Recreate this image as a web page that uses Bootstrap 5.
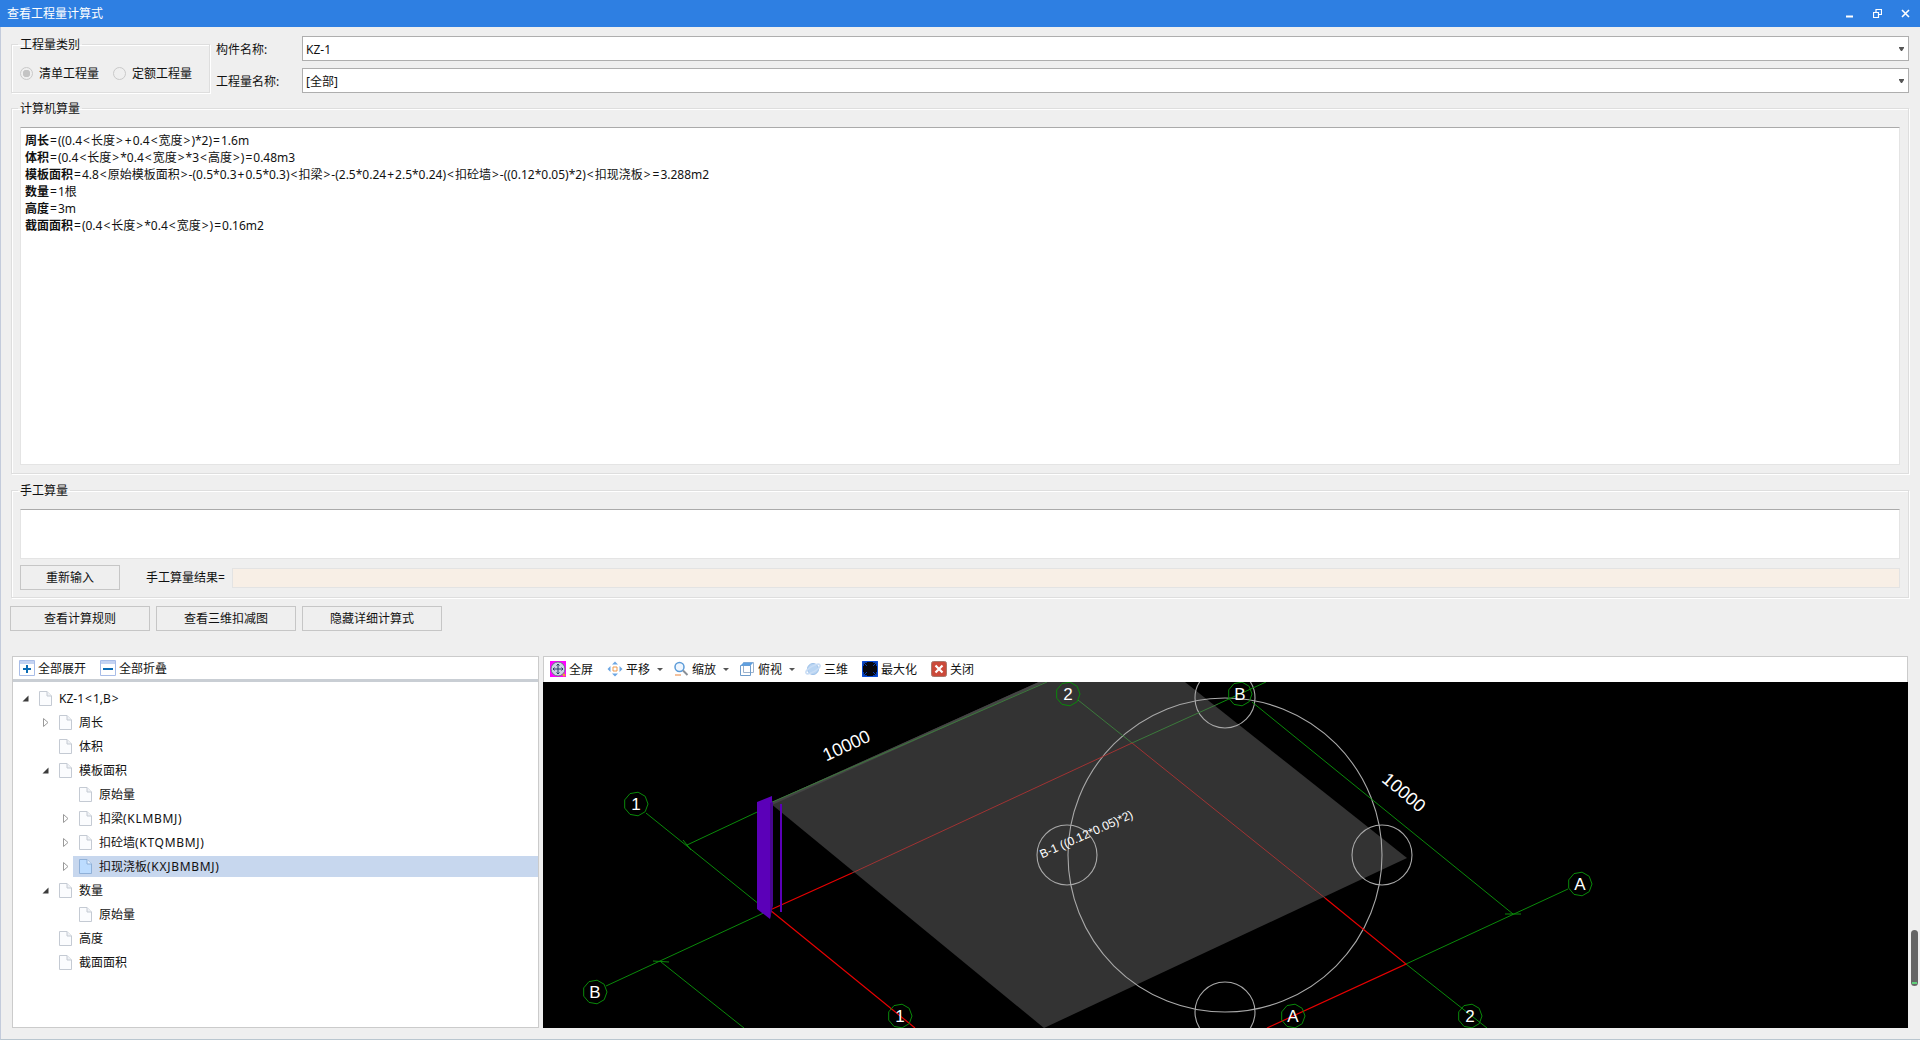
<!DOCTYPE html>
<html lang="zh-CN">
<head>
  <meta charset="UTF-8" />
  <meta name="viewport" content="width=device-width, initial-scale=1.0"/>
  <title>查看工程量计算式</title>
  <link href="https://cdn.jsdelivr.net/npm/bootstrap@5.3.3/dist/css/bootstrap.min.css" rel="stylesheet"/>
  <style>
    html, body { height: 100%; overflow: hidden; }
    body { font-family: "Noto Sans", "Noto Sans CJK SC", sans-serif; font-size: 12px; line-height: 17px; color: #111; background: #efefef; }
    .win { width: 1920px; height: 1040px; border-left: 1px solid #c3cbdb; border-bottom: 1px solid #b9c6cf; position: relative; }
    .title-bar { height: 27px; background: #2e7fe2; color: #fff; padding-left: 7px; margin-left: -1px; }
    .win-btns { padding-right: 10px; gap: 19px; }
    .top-row { height: 73px; padding: 9px 11px 0 10px; }
    .etched { border: 1px solid #dedede; box-shadow: 1px 1px 0 #fff, inset 1px 1px 0 #fff; margin: 0; min-width: 0; }
    .etched > legend { float: none; width: auto; font-size: 12px; line-height: 17px; margin: 0 0 0 -2px; padding: 0 2px; }
    .type-group { width: 199px; height: 57px; padding: 12px 0 0 8px; }
    .type-group .form-check-input { width: 13px; height: 13px; margin: 0; background-color: #efefef; border-color: #c9c9c9; opacity: 1; flex: none; }
    .type-group .form-check-input:checked { background-image: radial-gradient(circle, #c4c4c4 0 3.5px, transparent 4px); }
    .radio-text { margin: 0 14px 0 6px; opacity: 1; }
    .field-col { margin-left: 6px; gap: 7px; }
    .field-label { width: 86px; flex: none; padding-top: 2px; }
    .combo { height: 25px; padding: 2px 20px 0 3px; font-size: 12px; border: 1px solid #aeaeae; border-radius: 0; color: #111;
      background-image: url("data:image/svg+xml,%3csvg xmlns='http://www.w3.org/2000/svg' width='5' height='4'%3e%3cpath d='M0 0h5v1L3 4H2L0 1z' fill='%23555'/%3e%3c/svg%3e");
      background-size: 5px 4px; background-position: right 4px center; }
    .calc-group { margin: 0 11px 0 10px; height: 374px; padding: 10px 8px 8px 8px; }
    .formula-box { height: 338px; background: #fff; border: 1px solid #e4e4e4; border-top-color: #aaa; padding: 4px 4px; }
    .op { padding: 0 1px; }
    .code-tag { letter-spacing: .7px; }
    .hand-group { margin: 8px 11px 0 10px; height: 116px; padding: 10px 8px 0 8px; }
    .hand-input { height: 50px; background: #fff; border: 1px solid #e4e4e4; border-top-color: #aaa; }
    .hand-row { margin-top: 6px; }
    .flat-btn { background: #efefef; border: 1px solid #c6c6c6; font-size: 12px; color: #111; padding: 0; border-radius: 0; line-height: 22px; }
    .redo-btn { width: 100px; height: 25px; }
    .hand-label { margin-left: 26px; width: 86px; flex: none; }
    .result-box { height: 20px; background: #f8efe6; border: 1px solid #e3e3e3; }
    .action-row { padding: 8px 0 0 9px; gap: 6px; }
    .action-btn { width: 140px; height: 25px; }
    .panes { margin: 25px 11px 0 11px; height: 372px; gap: 4px; }
    .tree-pane { width: 527px; background: #fff; border: 1px solid #cbcbcb; }
    .tree-bar { height: 25px; border-bottom: 3px solid #c9ced4; padding: 0 0 0 6px; }
    .view-pane { width: 1365px; }
    .view-bar { height: 26px; background: #fff; border-top: 1px solid #cbcbcb; border-right: 1px solid #cbcbcb; border-left: 1px solid #cbcbcb; padding: 0 0 1px 6px; }
    .tool-item { gap: 3px; white-space: nowrap; }
    .tool-item svg { flex: none; display: block; }
    .tool-item + .tool-item { margin-left: 14px; }
    .tool-caret { width: 0; height: 0; border: 3px solid transparent; border-top: 3px solid #555; border-bottom: 0; margin-left: 4px; }
    .tool-item + .tool-item.after-caret { margin-left: 10px; }
    .tree-body { padding-top: 4px; }
    .tree-row { height: 24px; }
    .tree-row svg { flex: none; display: block; }
    .tree-twist { width: 9px; height: 9px; margin-right: 9px; }
    .tree-icon { width: 13px; height: 15px; margin-right: 7px; }
    .lvl0 { padding-left: 8px; }
    .lvl1 { padding-left: 28px; }
    .lvl2 { padding-left: 48px; }
    .tree-hit { flex: 1; height: 21px; margin-left: -6px; padding-left: 6px; }
    .tree-hit.active-row { background: #c7d7ee; }
    .cad { display: block; background: #000; }
    .cad text { font-family: "Liberation Sans", sans-serif; fill: #fff; }
    .ln-g { stroke: #0a8a0a; fill: none; stroke-width: 1; }
    .ln-gd { stroke: #3b7a3b; fill: none; stroke-width: 1; }
    .ln-r { stroke: #e80000; fill: none; stroke-width: 1.2; }
    .ln-rd { stroke: #a03333; fill: none; stroke-width: 1; }
    .ln-c { stroke: #a9a9a9; fill: none; stroke-width: 1.1; }
    .scroll-thumb { position: absolute; right: 2px; top: 930px; width: 7px; height: 56px; background: #666; border-radius: 4px; }
    .scroll-thumb::after { content: ""; position: absolute; left: 1px; right: 1px; bottom: 2px; height: 2px; background: #5fd07a; }
  </style>
</head>
<body>
<svg width="0" height="0" class="position-absolute">
  <defs>
    <symbol id="page" viewBox="0 0 13 15">
      <path d="M.5.5h7.500l4.500 4.500v9.500H.5z" fill="#fbfcfe" stroke="#c4cad3"/>
      <path d="M8 .5V5h4.500" fill="#eef1f5" stroke="#c4cad3"/>
    </symbol>
    <symbol id="page-sel" viewBox="0 0 13 15">
      <path d="M.5.5h7.500l4.500 4.500v9.500H.5z" fill="#bcdcff" stroke="#8fb0d8"/>
      <path d="M8 .5V5h4.500" fill="#e3f0ff" stroke="#8fb0d8"/>
    </symbol>
    <symbol id="open" viewBox="0 0 9 9"><path d="M7.500 1.500v6h-6z" fill="#3c3c3c"/></symbol>
    <symbol id="closed" viewBox="0 0 9 9"><path d="M2.500 .5l4.500 4-4.500 4z" fill="#fff" stroke="#9a9a9a"/></symbol>
    <polygon id="bubble" points="12,0 9.2,7.7 2.1,11.8 -6,10.4 -11.3,4.1 -11.3,-4.1 -6,-10.4 2.1,-11.8 9.2,-7.7" fill="none" stroke="#0a8a0a"/>
  </defs>
</svg>

<div class="win d-flex flex-column">
  <div class="title-bar d-flex align-items-center justify-content-between">
    <span>查看工程量计算式</span>
    <div class="win-btns d-flex align-items-center">
      <svg width="9" height="9" viewBox="0 0 9 9"><path d="M1 7.500h7" stroke="#fff" stroke-width="2"/></svg>
      <svg width="9" height="9" viewBox="0 0 9 9" fill="none" stroke="#fff"><path d="M.5 3.500h5v5h-5z" stroke-width="1.200"/><path d="M3 3V.5h5.500v5H6" stroke-width="1.200"/></svg>
      <svg width="9" height="9" viewBox="0 0 9 9"><path d="M1 1l7 7M8 1l-7 7" stroke="#fff" stroke-width="1.600"/></svg>
    </div>
  </div>

  <div class="top-row d-flex">
    <fieldset class="etched type-group">
      <legend>工程量类别</legend>
      <div class="d-flex align-items-center">
        <input class="form-check-input" type="radio" name="qtype" id="qt1" checked disabled>
        <label for="qt1" class="radio-text">清单工程量</label>
        <input class="form-check-input" type="radio" name="qtype" id="qt2" disabled>
        <label for="qt2" class="radio-text">定额工程量</label>
      </div>
    </fieldset>
    <div class="field-col flex-grow-1 d-flex flex-column">
      <div class="d-flex align-items-center">
        <span class="field-label">构件名称:</span>
        <select class="form-select combo"><option>KZ-1</option></select>
      </div>
      <div class="d-flex align-items-center">
        <span class="field-label">工程量名称:</span>
        <select class="form-select combo"><option>[全部]</option></select>
      </div>
    </div>
  </div>

  <fieldset class="etched calc-group">
    <legend>计算机算量</legend>
    <div class="formula-box">
      <div><b>周长</b><span class="op">=</span>((0.4<span class="op">&lt;</span>长度<span class="op">&gt;</span><span class="op">+</span>0.4<span class="op">&lt;</span>宽度<span class="op">&gt;</span>)*2)<span class="op">=</span>1.6m</div>
      <div><b>体积</b><span class="op">=</span>(0.4<span class="op">&lt;</span>长度<span class="op">&gt;</span>*0.4<span class="op">&lt;</span>宽度<span class="op">&gt;</span>*3<span class="op">&lt;</span>高度<span class="op">&gt;</span>)<span class="op">=</span>0.48m3</div>
      <div><b>模板面积</b><span class="op">=</span>4.8<span class="op">&lt;</span>原始模板面积<span class="op">&gt;</span>-(0.5*0.3<span class="op">+</span>0.5*0.3)<span class="op">&lt;</span>扣梁<span class="op">&gt;</span>-(2.5*0.24<span class="op">+</span>2.5*0.24)<span class="op">&lt;</span>扣砼墙<span class="op">&gt;</span>-((0.12*0.05)*2)<span class="op">&lt;</span>扣现浇板<span class="op">&gt;</span><span class="op">=</span>3.288m2</div>
      <div><b>数量</b><span class="op">=</span>1根</div>
      <div><b>高度</b><span class="op">=</span>3m</div>
      <div><b>截面面积</b><span class="op">=</span>(0.4<span class="op">&lt;</span>长度<span class="op">&gt;</span>*0.4<span class="op">&lt;</span>宽度<span class="op">&gt;</span>)<span class="op">=</span>0.16m2</div>
    </div>
  </fieldset>

  <fieldset class="etched hand-group">
    <legend>手工算量</legend>
    <div class="hand-input"></div>
    <div class="hand-row d-flex align-items-center">
      <button type="button" class="btn flat-btn redo-btn">重新输入</button>
      <span class="hand-label">手工算量结果=</span>
      <div class="result-box flex-grow-1"></div>
    </div>
  </fieldset>

  <div class="action-row d-flex">
    <button type="button" class="btn flat-btn action-btn">查看计算规则</button>
    <button type="button" class="btn flat-btn action-btn">查看三维扣减图</button>
    <button type="button" class="btn flat-btn action-btn">隐藏详细计算式</button>
  </div>

  <div class="panes d-flex">
    <div class="tree-pane d-flex flex-column">
      <div class="tree-bar d-flex align-items-center">
        <span class="tool-item d-flex align-items-center">
          <svg width="16" height="16" viewBox="0 0 16 16"><path d="M.5.500h15v15H.5z" fill="#fff" stroke="#a8bde8"/><path d="M1 1h14v3H1z" fill="#c4d3f2"/><path d="M8 5v8M4 9h8" stroke="#0b6cb4" stroke-width="2"/></svg>
          <span>全部展开</span>
        </span>
        <span class="tool-item d-flex align-items-center">
          <svg width="16" height="16" viewBox="0 0 16 16"><path d="M.5.500h15v15H.5z" fill="#fff" stroke="#a8bde8"/><path d="M1 1h14v3H1z" fill="#c4d3f2"/><path d="M3 9h10" stroke="#0b6cb4" stroke-width="2"/></svg>
          <span>全部折叠</span>
        </span>
      </div>
      <div class="tree-body">
        <div class="tree-row d-flex align-items-center lvl0"><svg class="tree-twist"><use href="#open"/></svg><svg class="tree-icon"><use href="#page"/></svg><span>KZ-1<span class="op">&lt;</span>1,B<span class="op">&gt;</span></span></div>
        <div class="tree-row d-flex align-items-center lvl1"><svg class="tree-twist"><use href="#closed"/></svg><svg class="tree-icon"><use href="#page"/></svg><span>周长</span></div>
        <div class="tree-row d-flex align-items-center lvl1"><svg class="tree-twist"></svg><svg class="tree-icon"><use href="#page"/></svg><span>体积</span></div>
        <div class="tree-row d-flex align-items-center lvl1"><svg class="tree-twist"><use href="#open"/></svg><svg class="tree-icon"><use href="#page"/></svg><span>模板面积</span></div>
        <div class="tree-row d-flex align-items-center lvl2"><svg class="tree-twist"></svg><svg class="tree-icon"><use href="#page"/></svg><span>原始量</span></div>
        <div class="tree-row d-flex align-items-center lvl2"><svg class="tree-twist"><use href="#closed"/></svg><svg class="tree-icon"><use href="#page"/></svg><span>扣梁<span class="code-tag">(KLMBMJ)</span></span></div>
        <div class="tree-row d-flex align-items-center lvl2"><svg class="tree-twist"><use href="#closed"/></svg><svg class="tree-icon"><use href="#page"/></svg><span>扣砼墙<span class="code-tag">(KTQMBMJ)</span></span></div>
        <div class="tree-row d-flex align-items-center lvl2"><svg class="tree-twist"><use href="#closed"/></svg><div class="tree-hit active-row d-flex align-items-center"><svg class="tree-icon"><use href="#page-sel"/></svg><span>扣现浇板<span class="code-tag">(KXJBMBMJ)</span></span></div></div>
        <div class="tree-row d-flex align-items-center lvl1"><svg class="tree-twist"><use href="#open"/></svg><svg class="tree-icon"><use href="#page"/></svg><span>数量</span></div>
        <div class="tree-row d-flex align-items-center lvl2"><svg class="tree-twist"></svg><svg class="tree-icon"><use href="#page"/></svg><span>原始量</span></div>
        <div class="tree-row d-flex align-items-center lvl1"><svg class="tree-twist"></svg><svg class="tree-icon"><use href="#page"/></svg><span>高度</span></div>
        <div class="tree-row d-flex align-items-center lvl1"><svg class="tree-twist"></svg><svg class="tree-icon"><use href="#page"/></svg><span>截面面积</span></div>
      </div>
    </div>

    <div class="view-pane d-flex flex-column">
      <div class="view-bar d-flex align-items-center">
        <span class="tool-item d-flex align-items-center">
          <svg width="16" height="16" viewBox="0 0 16 16"><path d="M0 0h16v16H0z" fill="#f0f"/><circle cx="8" cy="8" r="7" fill="#c9d3e2" stroke="#6b7585"/><path d="M8 3v10M3 8h10M6.500 4.500L8 3l1.500 1.500M6.500 11.500L8 13l1.500-1.500M4.500 6.500L3 8l1.500 1.500M11.500 6.500L13 8l-1.500 1.500" fill="none" stroke="#2a3f66"/><circle cx="14" cy="14" r="1.500" fill="#f0a030"/></svg>
          <span>全屏</span>
        </span>
        <span class="tool-item d-flex align-items-center">
          <svg width="16" height="16" viewBox="0 0 16 16"><path d="M8 .5l3 3H5zM8 15.500l3-3H5zM.5 8l3-3v6zM15.500 8l-3-3v6z" fill="#6da7e4"/><path d="M6 6h4v4H6z" fill="#fff" stroke="#ee9a4d"/></svg>
          <span>平移</span><span class="tool-caret"></span>
        </span>
        <span class="tool-item after-caret d-flex align-items-center">
          <svg width="16" height="16" viewBox="0 0 16 16"><circle cx="6.500" cy="6" r="4.500" fill="#eef6ff" stroke="#5b9bd8" stroke-width="1.500"/><path d="M10 9.500l4.500 4.500" stroke="#8a8f96" stroke-width="2"/><path d="M2 14h6" stroke="#e9843c"/></svg>
          <span>缩放</span><span class="tool-caret"></span>
        </span>
        <span class="tool-item after-caret d-flex align-items-center">
          <svg width="16" height="16" viewBox="0 0 16 16"><path d="M4.500 1.500h10v10h-10z" fill="#fff" stroke="#9cb2cc"/><path d="M1.500 4.500h10v10h-10z" fill="none" stroke="#6f9dcc"/><path d="M1.500 4.500l3-3h10l-3 3z" fill="#5e9fe0"/></svg>
          <span>俯视</span><span class="tool-caret"></span>
        </span>
        <span class="tool-item after-caret d-flex align-items-center">
          <svg width="16" height="16" viewBox="0 0 16 16"><circle cx="8" cy="8" r="5.500" fill="#b9d5f3" stroke="#9cc0e8"/><ellipse cx="8" cy="8" rx="8" ry="2.800" transform="rotate(-30 8 8)" fill="none" stroke="#c9ddf5" stroke-width="1.500"/></svg>
          <span>三维</span>
        </span>
        <span class="tool-item d-flex align-items-center">
          <svg width="16" height="16" viewBox="0 0 16 16"><path d="M.5.5h15v15H.5z" fill="#05070f" stroke="#0a4ed8"/><path d="M1 5V1h4M11 1h4v4M15 11v4h-4M5 15H1v-4" fill="none" stroke="#0a4ed8" stroke-width="1.500"/><path d="M2 2l3 3M14 2l-3 3M14 14l-3-3M2 14l3-3" stroke="#0a3fb0"/></svg>
          <span>最大化</span>
        </span>
        <span class="tool-item d-flex align-items-center">
          <svg width="16" height="16" viewBox="0 0 16 16"><rect x=".5" y=".5" width="15" height="15" rx="2" fill="#cb4a3a" stroke="#a9786c"/><path d="M4.500 4.500l7 7M11.500 4.500l-7 7" stroke="#fff" stroke-width="2.200"/></svg>
          <span>关闭</span>
        </span>
      </div>

      <svg class="cad" width="1365" height="346" viewBox="543 682 1365 346">
        <!-- slab -->
        <polygon points="770,803 1132,640 1407,858 1044,1028" fill="#333"/>
        <polygon points="770,803 1132,640 1132,643 772,805" fill="#444"/>
        <!-- rings -->
        <circle class="ln-c" cx="1225" cy="855" r="157"/>
        <circle class="ln-c" cx="1067" cy="855" r="30"/>
        <circle class="ln-c" cx="1225" cy="698" r="30"/>
        <circle class="ln-c" cx="1382" cy="855" r="30"/>
        <circle class="ln-c" cx="1225" cy="1012" r="30"/>
        <!-- axis lines -->
        <path class="ln-g" d="M646 813L770 913M606 986L770 910M687 845L770 806M661 962L744 1028M1218 704L1266 682M1252 702L1513 914M1568 889L1406 964L1487 1028"/>
        <path class="ln-gd" d="M770 803L1047 682M1078 700L1132 743L1218 704"/>
        <path class="ln-r" d="M770 910L915 1028M852 873L770 910M1325 898L1406 964L1267 1028"/>
        <path class="ln-rd" d="M852 873L1132 743L1325 898"/>
        <path class="ln-g" d="M683 840L691 850M653 961L669 962M1505 914L1521 914"/>
        <!-- column -->
        <polygon points="757,802 772,796 773,904 770,919 757,909" fill="#5b00b8"/>
        <polygon points="770,803 773,802 773,904 770,919" fill="#47068f"/>
        <path d="M781 804V912" stroke="#5b00b8" stroke-width="2"/>
        <!-- axis bubbles -->
        <use href="#bubble" transform="translate(636 804)"/>
        <use href="#bubble" transform="translate(595 992)"/>
        <use href="#bubble" transform="translate(900 1016)"/>
        <use href="#bubble" transform="translate(1068 694)"/>
        <use href="#bubble" transform="translate(1240 694)"/>
        <use href="#bubble" transform="translate(1580 884)"/>
        <use href="#bubble" transform="translate(1293 1016)"/>
        <use href="#bubble" transform="translate(1470 1016)"/>
        <g font-size="17" text-anchor="middle">
          <text x="636" y="810">1</text>
          <text x="595" y="998">B</text>
          <text x="900" y="1022">1</text>
          <text x="1068" y="700">2</text>
          <text x="1240" y="700">B</text>
          <text x="1580" y="890">A</text>
          <text x="1293" y="1022">A</text>
          <text x="1470" y="1022">2</text>
        </g>
        <text x="0" y="0" font-size="18" text-anchor="middle" transform="translate(849 751) rotate(-25)">10000</text>
        <text x="0" y="0" font-size="18" text-anchor="middle" transform="translate(1400 797) rotate(40)">10000</text>
        <text x="0" y="0" font-size="12" text-anchor="middle" transform="translate(1088 838) rotate(-24)">B-1 ((0.12*0.05)*2)</text>
      </svg>
    </div>
  </div>
  <div class="scroll-thumb"></div>
</div>
<script src="https://cdn.jsdelivr.net/npm/bootstrap@5.3.3/dist/js/bootstrap.bundle.min.js"></script>
</body>
</html>
